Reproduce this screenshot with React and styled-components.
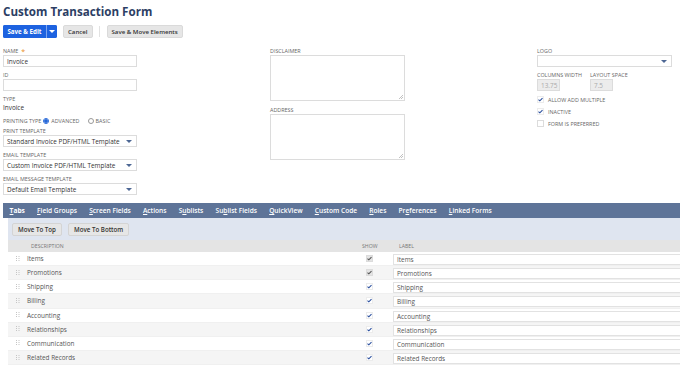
import React from 'react';
import styled, { createGlobalStyle } from 'styled-components';

const GlobalStyle = createGlobalStyle`
    html, body {
        margin: 0;
        padding: 0;
        background: #ffffff;
        font-family: "Open Sans", "Liberation Sans", sans-serif;
        overflow: hidden;
    }
`;

const Page = styled.div`
    width: 680px;
    height: 366px;
    overflow: hidden;
    background: #fff;
`;

const Header = styled.div`
    padding: 3px 0 0 3px;
`;

const Title = styled.h1`
    margin: 0;
    font-size: 11.6px;
    line-height: 18px;
    font-weight: 700;
    color: #2c3e64;
`;

const Toolbar = styled.div`
    display: flex;
    align-items: center;
    margin-top: 4px;
    height: 13px;
`;

const PrimaryGroup = styled.div`
    display: flex;
    height: 13px;
    border-radius: 2px;
    overflow: hidden;
    background: #1d62e0;
`;

const PrimaryButton = styled.button`
    border: none;
    background: #1d62e0;
    color: #fff;
    font-family: inherit;
    font-weight: 700;
    font-size: 6.2px;
    padding: 0;
    height: 13px;
    width: ${(p) => p.$w};
    white-space: nowrap;
    display: flex;
    align-items: center;
    justify-content: center;
    border-left: ${(p) => (p.$split ? '1px solid #7fa5ee' : 'none')};
`;

const GrayButton = styled.button`
    border: 1px solid #dadada;
    background: #e6e6e6;
    color: #333;
    font-family: inherit;
    font-weight: 600;
    font-size: 6.1px;
    height: 13px;
    padding: 0 4px;
    border-radius: 2px;
    white-space: nowrap;
    margin-left: ${(p) => p.$ml || '0'};
    display: flex;
    align-items: center;
`;

const Divider = styled.div`
    width: 1px;
    height: 11px;
    background: #e2e2e2;
    margin-left: 6px;
`;

const FormGrid = styled.div`
    display: grid;
    grid-template-columns: 267px 267px 1fr;
    padding-left: 3px;
    margin-top: 10px;
    height: 155px;
`;

const Column = styled.div`
    display: flex;
    flex-direction: column;
`;

const Label = styled.div`
    font-size: 5.4px;
    line-height: 7px;
    height: 7px;
    color: #666;
    text-transform: uppercase;
    white-space: nowrap;
    margin-top: ${(p) => p.$mt || '0'};
    display: flex;
    align-items: center;
`;

const Required = styled.span`
    color: #e98b1c;
    margin-left: 3px;
    font-size: 7px;
`;

const Input = styled.div`
    box-sizing: border-box;
    width: ${(p) => p.$w || '134px'};
    height: 12px;
    border: 1px solid #dcdcdc;
    background: ${(p) => (p.$disabled ? '#ececec' : '#fff')};
    color: ${(p) => (p.$disabled ? '#aaa' : '#333')};
    font-size: 6.4px;
    padding: 0 3px;
    display: flex;
    align-items: center;
    justify-content: space-between;
    white-space: nowrap;
`;

const Arrow = styled.span`
    width: 0;
    height: 0;
    border-left: 3.5px solid transparent;
    border-right: 3.5px solid transparent;
    border-top: 3.5px solid ${(p) => p.$color || '#4d6794'};
    margin-right: ${(p) => (p.$color ? '0' : '1px')};
`;

const Value = styled.div`
    font-size: 6.4px;
    line-height: 9px;
    color: #333;
`;

const RadioRow = styled.div`
    display: flex;
    align-items: center;
    margin-top: 5px;
    height: 7px;
    font-size: 5.4px;
    color: #666;
    text-transform: uppercase;
    gap: 2px;
`;

const Radio = styled.span`
    box-sizing: border-box;
    width: 6px;
    height: 6px;
    border-radius: 50%;
    border: 1px solid ${(p) => (p.$on ? '#2466d8' : '#999')};
    background: ${(p) => (p.$on ? 'radial-gradient(circle, #2466d8 55%, #fff 60%)' : '#fff')};
    margin-left: ${(p) => p.$ml || '0'};
`;

const TextArea = styled.div`
    position: relative;
    box-sizing: border-box;
    width: 135px;
    height: 46px;
    border: 1px solid #dcdcdc;
    background: #fff;
`;

const Grip = styled.svg`
    position: absolute;
    right: 1px;
    bottom: 1px;
`;

const Pair = styled.div`
    display: grid;
    grid-template-columns: 53px 60px;
`;

const CheckRow = styled.div`
    display: flex;
    align-items: center;
    height: 7px;
    margin-top: ${(p) => p.$mt || '0'};
    font-size: 5.4px;
    color: #666;
    text-transform: uppercase;
    gap: 4px;
`;

const Box = styled.span`
    box-sizing: border-box;
    width: 7px;
    height: 7px;
    border: 1px solid ${(p) => (p.$light ? '#ececec' : '#dcdcdc')};
    background: ${(p) => (p.$disabled ? '#e4e4e4' : '#fff')};
    display: flex;
    align-items: center;
    justify-content: center;
`;

const TabBar = styled.div`
    margin-left: 3px;
    height: 15px;
    background: #5e7498;
    display: flex;
    align-items: center;
    padding-left: 0.5px;
`;

const Tab = styled.div`
    color: #fff;
    font-size: 6.6px;
    font-weight: ${(p) => (p.$active ? 700 : 600)};
    padding: 0 6.1px;
    white-space: nowrap;
    line-height: 15px;
    height: 15px;
    u {
        text-decoration: underline;
    }
`;

const Panel = styled.div`
    margin-left: 8px;
`;

const ActionBar = styled.div`
    height: 22px;
    background: #dfe5f0;
    display: flex;
    align-items: center;
    padding-left: 4px;
    gap: 6px;
`;

const SmallButton = styled.button`
    border: 1px solid #d4d4d4;
    background: #e6e6e6;
    color: #333;
    font-family: inherit;
    font-size: 6.2px;
    font-weight: 600;
    height: 13px;
    padding: 0 5px;
    border-radius: 2px;
`;

const TableHead = styled.div`
    display: flex;
    align-items: center;
    height: 12px;
    background: #e4e4e4;
    font-size: 5.2px;
    color: #777;
    text-transform: uppercase;
`;

const HeadCell = styled.div`
    width: ${(p) => p.$w};
    padding-left: ${(p) => p.$pl || '0'};
    box-sizing: border-box;
    flex-shrink: 0;
`;

const Row = styled.div`
    display: flex;
    align-items: center;
    height: 14.15px;
    background: ${(p) => (p.$alt ? '#f5f5f5' : '#fff')};
    border-bottom: 1px solid #f0f0f0;
    box-sizing: border-box;
`;

const Handle = styled.div`
    width: 19px;
    display: flex;
    justify-content: center;
    flex-shrink: 0;
`;

const Desc = styled.div`
    width: 339px;
    font-size: 6.4px;
    color: #555;
    flex-shrink: 0;
`;

const ShowCell = styled.div`
    width: 27px;
    display: flex;
    padding-left: 0;
    flex-shrink: 0;
`;

const LabelInput = styled.div`
    flex: 1;
    height: 11px;
    box-sizing: border-box;
    border: 1px solid #e2e2e2;
    border-right: none;
    background: #fff;
    font-size: 6.4px;
    color: #555;
    display: flex;
    align-items: center;
    padding-left: 3px;
    margin-top: 2px;
`;

const Check = ({ color = '#2a4f9e' }) => (
    <svg width="6" height="5" viewBox="0 0 6 5">
        <path d="M0.6 2.6 L2.2 4.1 L5.4 0.8" stroke={color} strokeWidth="1.3" fill="none" />
    </svg>
);

const Dots = () => (
    <svg width="4" height="6" viewBox="0 0 4 6">
        {[0, 2, 4].map((y) => (
            <g key={y}>
                <rect x="0" y={y} width="1" height="1" fill="#c4c4c4" />
                <rect x="2.5" y={y} width="1" height="1" fill="#c4c4c4" />
            </g>
        ))}
    </svg>
);

const ResizeGrip = () => (
    <Grip width="5" height="5" viewBox="0 0 5 5">
        <path d="M1 5 L5 1 M3 5 L5 3" stroke="#999" strokeWidth="0.6" />
    </Grip>
);

const tabs = [
    ['', 'T', 'abs'],
    ['', 'F', 'ield Groups'],
    ['', 'S', 'creen Fields'],
    ['', 'A', 'ctions'],
    ['S', 'u', 'blists'],
    ['Su', 'b', 'list Fields'],
    ['', 'Q', 'uickView'],
    ['', 'C', 'ustom Code'],
    ['', 'R', 'oles'],
    ['Pr', 'e', 'ferences'],
    ['', 'L', 'inked Forms'],
];

const rows = ['Items', 'Promotions', 'Shipping', 'Billing', 'Accounting', 'Relationships', 'Communication', 'Related Records'];

const App = () => (
    <Page>
        <GlobalStyle />
        <Header>
            <Title>Custom Transaction Form</Title>
            <Toolbar>
                <PrimaryGroup>
                    <PrimaryButton $w="43px">Save &amp; Edit</PrimaryButton>
                    <PrimaryButton $w="11px" $split>
                        <Arrow $color="#fff" />
                    </PrimaryButton>
                </PrimaryGroup>
                <GrayButton $ml="6px">Cancel</GrayButton>
                <Divider />
                <GrayButton $ml="7px">Save &amp; Move Elements</GrayButton>
            </Toolbar>
        </Header>
        <FormGrid>
            <Column>
                <Label>Name<Required>*</Required></Label>
                <Input>Invoice</Input>
                <Label $mt="5px">ID</Label>
                <Input />
                <Label $mt="5px">Type</Label>
                <Value>Invoice</Value>
                <RadioRow>
                    Printing Type <Radio $on /> Advanced <Radio $ml="6px" /> Basic
                </RadioRow>
                <Label $mt="4px">Print Template</Label>
                <Input>Standard Invoice PDF/HTML Template<Arrow /></Input>
                <Label $mt="5px">Email Template</Label>
                <Input>Custom Invoice PDF/HTML Template<Arrow /></Input>
                <Label $mt="5px">Email Message Template</Label>
                <Input>Default Email Template<Arrow /></Input>
            </Column>
            <Column>
                <Label>Disclaimer</Label>
                <TextArea><ResizeGrip /></TextArea>
                <Label $mt="6px">Address</Label>
                <TextArea><ResizeGrip /></TextArea>
            </Column>
            <Column>
                <Label>Logo</Label>
                <Input $w="135px"><span /><Arrow /></Input>
                <Pair>
                    <Label $mt="5px">Columns Width</Label>
                    <Label $mt="5px">Layout Space</Label>
                </Pair>
                <Pair>
                    <Input $w="23px" $disabled>13.75</Input>
                    <Input $w="23px" $disabled>7.5</Input>
                </Pair>
                <CheckRow $mt="5px"><Box $light><Check /></Box>Allow Add Multiple</CheckRow>
                <CheckRow $mt="5px"><Box $light><Check /></Box>Inactive</CheckRow>
                <CheckRow $mt="5px"><Box />Form Is Preferred</CheckRow>
            </Column>
        </FormGrid>
        <TabBar>
            {tabs.map(([a, u, b], i) => (
                <Tab key={i} $active={i === 0}>
                    {a}<u>{u}</u>{b}
                </Tab>
            ))}
        </TabBar>
        <Panel>
            <ActionBar>
                <SmallButton>Move To Top</SmallButton>
                <SmallButton>Move To Bottom</SmallButton>
            </ActionBar>
            <TableHead>
                <HeadCell $w="354px" $pl="23px">Description</HeadCell>
                <HeadCell $w="31px">Show</HeadCell>
                <HeadCell $w="100px" $pl="6px">Label</HeadCell>
            </TableHead>
            {rows.map((r, i) => (
                <Row key={r} $alt={i % 2 === 1}>
                    <Handle><Dots /></Handle>
                    <Desc>{r}</Desc>
                    <ShowCell>
                        <Box $disabled={i < 2} $light={i >= 2}>
                            <Check color={i < 2 ? '#555' : '#2a4f9e'} />
                        </Box>
                    </ShowCell>
                    <LabelInput>{r}</LabelInput>
                </Row>
            ))}
        </Panel>
    </Page>
);

export default App;
